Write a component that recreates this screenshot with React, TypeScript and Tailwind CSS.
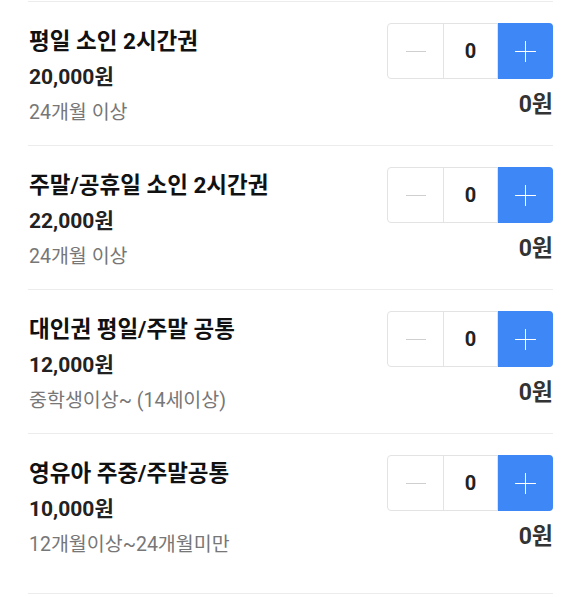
import { useState } from 'react';

interface Ticket {
  title: string;
  price: number;
  note: string;
}

const tickets: Ticket[] = [
  { title: '평일 소인 2시간권', price: 20000, note: '24개월 이상' },
  { title: '주말/공휴일 소인 2시간권', price: 22000, note: '24개월 이상' },
  { title: '대인권 평일/주말 공통', price: 12000, note: '중학생이상~ (14세이상)' },
  { title: '영유아 주중/주말공통', price: 10000, note: '12개월이상~24개월미만' },
];

const won = (n: number) => `${n.toLocaleString('ko-KR')}원`;

function Stepper({ value, onChange }: { value: number; onChange: (v: number) => void }) {
  return (
    <div className="flex h-[56px] w-[166px] rounded-[4px] border border-[#e3e3e3] bg-white">
      <button
        type="button"
        onClick={() => onChange(Math.max(0, value - 1))}
        className="flex w-[55px] items-center justify-center"
        aria-label="감소"
      >
        <span className="block h-px w-[20px] bg-[#cfcfcf]" />
      </button>
      <span className="flex w-[55px] items-center justify-center border-x border-[#e3e3e3] text-[20px] font-bold text-[#222]">
        {value}
      </span>
      <button
        type="button"
        onClick={() => onChange(value + 1)}
        className="-my-px -mr-px relative flex flex-1 items-center justify-center rounded-r-[4px] bg-[#3d87f6]"
        aria-label="증가"
      >
        <span className="absolute h-px w-[21px] bg-white" />
        <span className="absolute h-[21px] w-px bg-white" />
      </button>
    </div>
  );
}

function TicketRow({ ticket, last }: { ticket: Ticket; last?: boolean }) {
  const [count, setCount] = useState(0);
  return (
    <div className={`flex justify-between border-t border-[#ececec] pt-[21px] ${last ? 'pb-[34px]' : 'pb-[18px]'}`}>
      <div className="pt-[4px] pl-px">
        <h3 className="text-[22.5px] font-bold leading-[28px] text-[#111]">{ticket.title}</h3>
        <p className="mt-[8px] text-[21px] font-bold leading-[28px] text-[#222]">{won(ticket.price)}</p>
        <p className="mt-[8px] text-[19.5px] leading-[28px] text-[#777]">{ticket.note}</p>
      </div>
      <div className="flex flex-col items-end">
        <Stepper value={count} onChange={setCount} />
        <span className="mt-[14px] text-[23px] font-bold leading-[24px] text-[#333]">
          {won(ticket.price * count)}
        </span>
      </div>
    </div>
  );
}

export default function App() {
  return (
    <div
      className="min-h-[597px] bg-white pt-px"
      style={{ fontFamily: 'Roboto, "Noto Sans CJK KR", sans-serif' }}
    >
      <div className="ml-[28px] mr-[27px] border-b border-[#ececec]">
        {tickets.map((t, i) => (
          <TicketRow key={t.title} ticket={t} last={i === tickets.length - 1} />
        ))}
      </div>
    </div>
  );
}
